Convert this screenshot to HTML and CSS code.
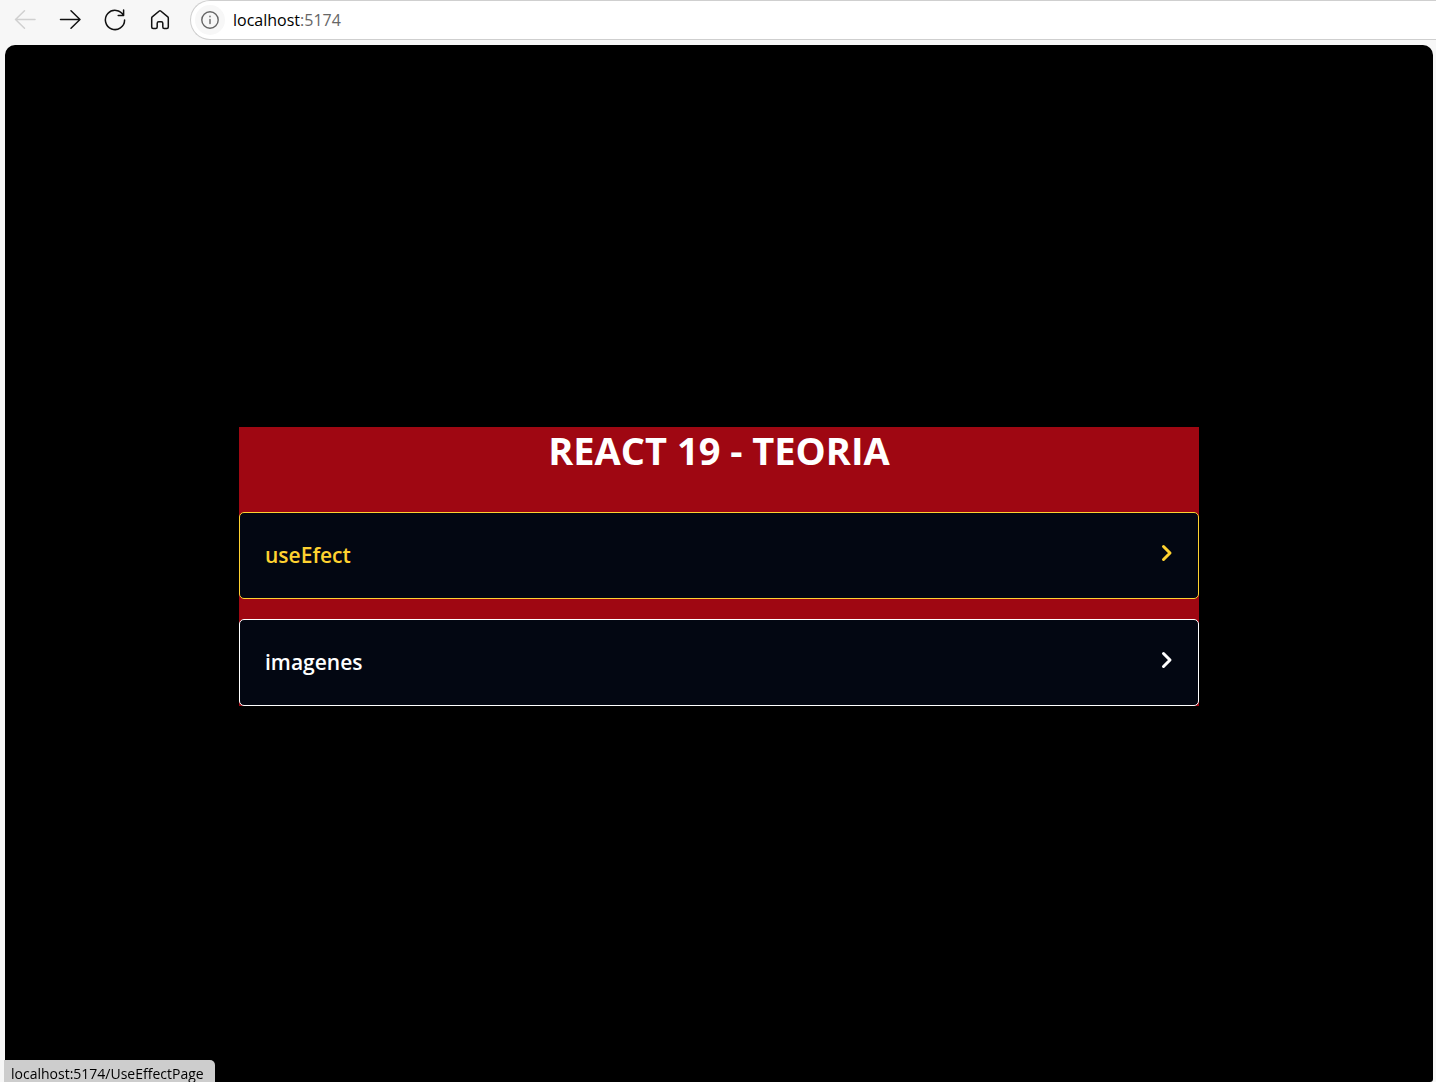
FILE: index.html
```html
<!DOCTYPE html>
<html lang="es">
<head>
<meta charset="utf-8">
<meta name="viewport" content="width=device-width, initial-scale=1">
<title>React 19 - Teoria</title>
<link rel="stylesheet" href="styles.css">
</head>
<body>
<header class="toolbar">
  <nav class="toolbar-actions" aria-label="Navegador">
    <button class="tool" type="button" aria-label="Atrás" disabled>
      <svg viewBox="0 0 24 24"><path d="M22 11.5H2.500M11.500 2.800L2.500 11.500L11.500 20.200"/></svg>
    </button>
    <button class="tool" type="button" aria-label="Adelante">
      <svg viewBox="0 0 24 24"><path d="M2.500 11.500H22M13 2.800L22 11.500L13 20.200"/></svg>
    </button>
    <button class="tool" type="button" aria-label="Recargar">
      <svg viewBox="0 0 24 24"><path d="M20.500 7.500A9.600 9.600 0 1 0 21.600 12M20.600 2V7.500H15.200"/></svg>
    </button>
    <button class="tool" type="button" aria-label="Inicio">
      <svg viewBox="0 0 24 24"><path d="M3.700 9.900Q3.700 9.300 4.200 8.900L11.300 3Q12 2.400 12.700 3L19.800 8.900Q20.300 9.300 20.300 9.900V19Q20.300 20.500 18.800 20.500H16.200Q14.800 20.500 14.800 19V15.200Q14.800 13.700 13.300 13.700H10.700Q9.200 13.700 9.200 15.200V19Q9.200 20.500 7.800 20.500H5.200Q3.700 20.500 3.700 19Z"/></svg>
    </button>
  </nav>
  <div class="address">
    <button class="site-info" type="button" aria-label="Información del sitio">
      <svg viewBox="0 0 20 20"><circle cx="10" cy="10" r="8.200"/><path d="M10 9.500V13.500M10 6.200V6.800"/></svg>
    </button>
    <span class="url">localhost<span class="port">:5174</span></span>
  </div>
</header>
<main class="viewport">
  <section class="panel">
    <h1 class="title">REACT 19 - TEORIA</h1>
    <nav class="topics" aria-label="Temas">
      <a class="topic topic-active" href="/UseEffectPage">
        <span>useEfect</span>
        <svg class="chevron" viewBox="0 0 12 18"><path d="M2.500 2.500L9 9L2.500 15.500"/></svg>
      </a>
      <a class="topic" href="/ImagenesPage">
        <span>imagenes</span>
        <svg class="chevron" viewBox="0 0 12 18"><path d="M2.500 2.500L9 9L2.500 15.500"/></svg>
      </a>
    </nav>
  </section>
</main>
<div class="status">localhost:5174/UseEffectPage</div>
</body>
</html>
```
FILE: styles.css
```css
* {
  box-sizing: border-box;
}

body {
  display: flex;
  flex-direction: column;
  min-height: 100vh;
  margin: 0;
  background: #f7f7f7;
  color: #000;
  font-family: "Open Sans", "Noto Sans", sans-serif;
}

button {
  display: grid;
  place-items: center;
  padding: 0;
  border: 0;
  background: none;
  color: inherit;
}

svg {
  display: block;
  fill: none;
  stroke: currentColor;
  stroke-linecap: round;
  stroke-linejoin: round;
}

.toolbar {
  display: flex;
  gap: 12px;
  padding-left: 7px;
  height: 40px;
}

.toolbar-actions {
  display: flex;
  align-items: center;
  gap: 9px;
}

.tool {
  width: 36px;
  height: 36px;
  color: #111;
}

.tool:disabled {
  color: #d0d0d0;
}

.tool svg {
  width: 24px;
  height: 24px;
  stroke-width: 1.5;
}

.address {
  display: flex;
  flex: 1;
  align-items: center;
  gap: 8px;
  padding-left: 4px;
  border: 1px solid #cfcfcf;
  border-right: 0;
  border-radius: 20px 0 0 20px;
  background: #fff;
}

.site-info {
  width: 30px;
  height: 30px;
  border-radius: 50%;
  background: #f7f7f7;
  color: #666;
}

.site-info svg {
  width: 20px;
  height: 20px;
  stroke-width: 1.4;
}

.url {
  font-size: 16px;
  line-height: 24px;
}

.port {
  color: #666;
}

.viewport {
  display: flex;
  flex: 1;
  align-items: center;
  justify-content: center;
  margin: 5px 3px 0 5px;
  padding-top: 6px;
  border-radius: 10px 10px 3px 3px;
  background: #000;
}

.panel {
  width: 100%;
  max-width: 960px;
  background: #9f0712;
}

.title {
  margin: 0 0 38px;
  color: #fff;
  font-size: 38px;
  font-weight: 700;
  line-height: 47px;
  text-align: center;
}

.topics {
  display: flex;
  flex-direction: column;
  gap: 20px;
}

.topic {
  display: flex;
  align-items: center;
  justify-content: space-between;
  padding: 25px;
  border: 1px solid #fff;
  border-radius: 5px;
  background: #030712;
  color: #fff;
  font-size: 21px;
  font-weight: 600;
  line-height: 35px;
  text-decoration: none;
}

.topic-active {
  border-color: #ffd230;
  color: #ffd230;
}

.chevron {
  width: 12px;
  height: 18px;
  margin-bottom: 5px;
  stroke-width: 3;
}

.status {
  position: fixed;
  bottom: 0;
  left: 4px;
  height: 22px;
  padding: 3px 11px 0 7px;
  border-radius: 0 5px 0 0;
  background: #cdcdcd;
  font-size: 14px;
  line-height: 22px;
}
```
